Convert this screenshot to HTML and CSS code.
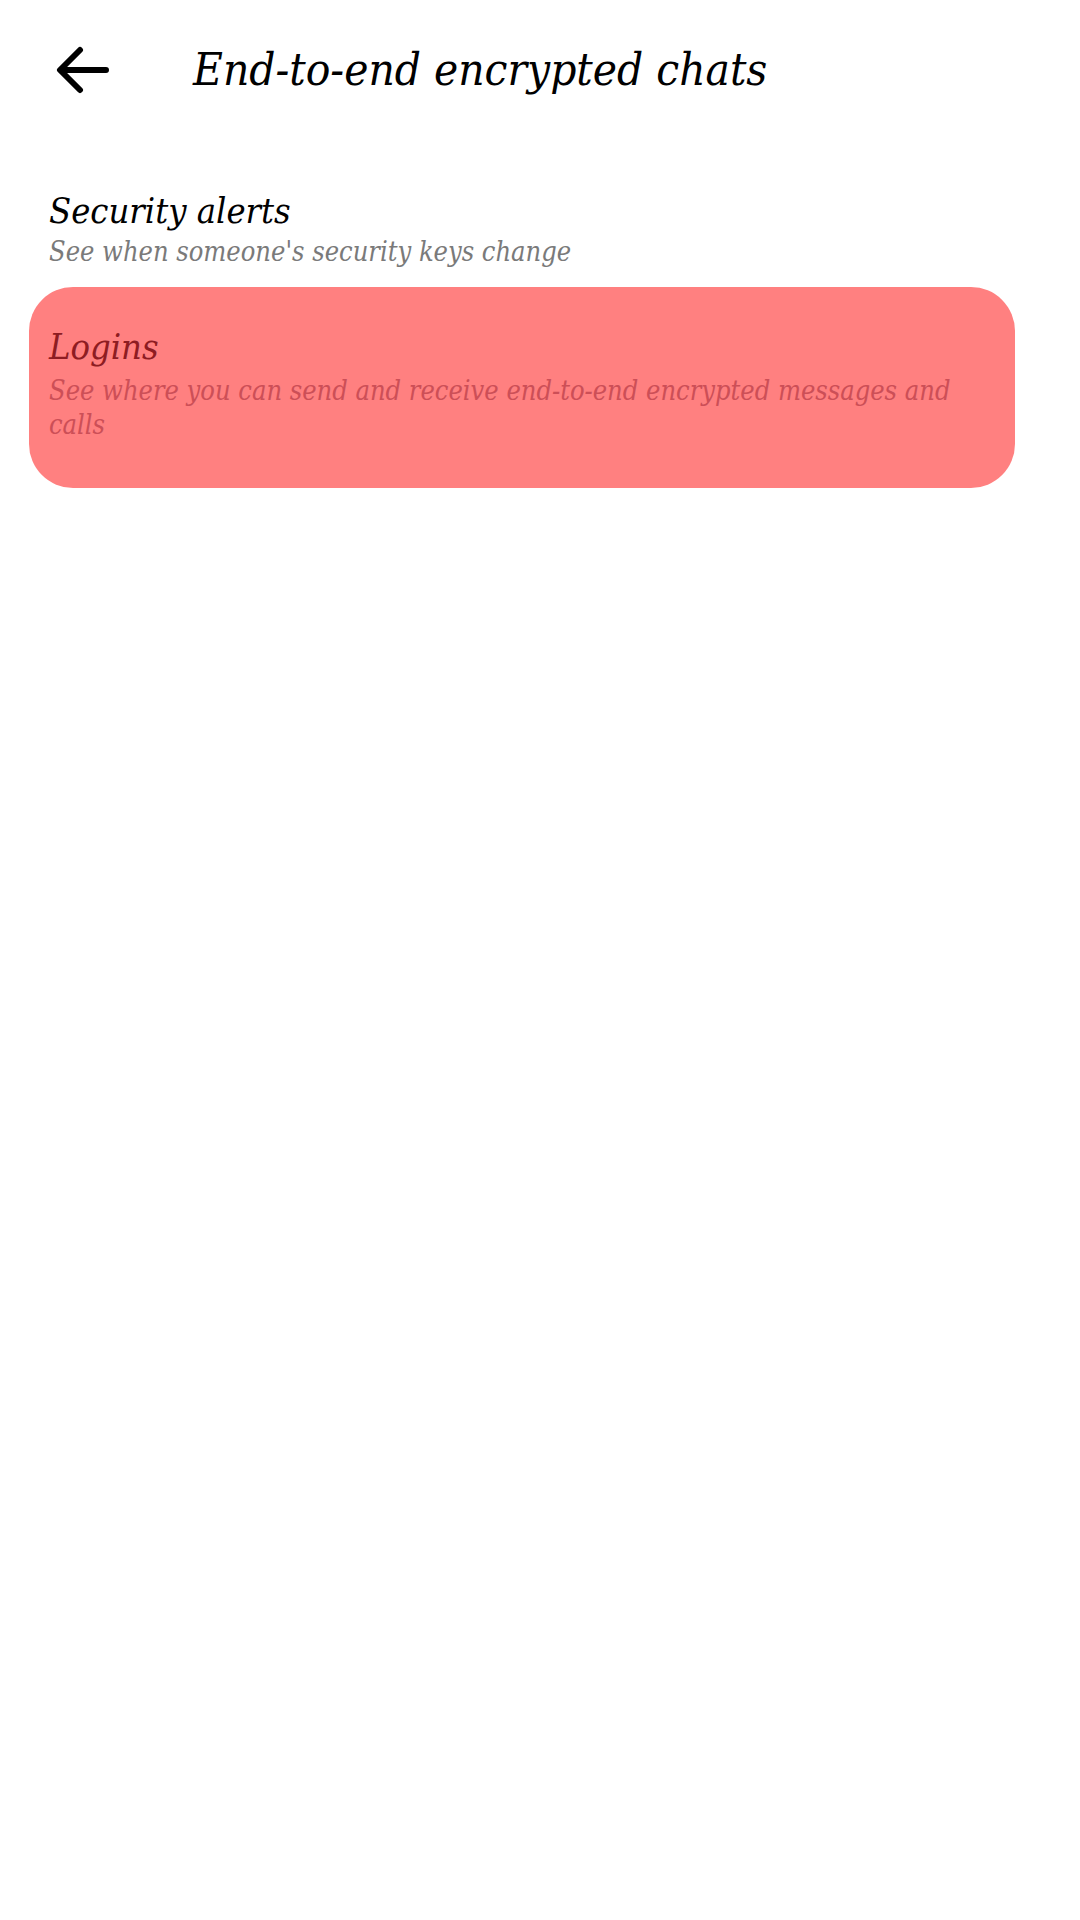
FILE: index.html
```html
<!DOCTYPE html>
<html lang="en">
<head>
<meta charset="utf-8">
<title>End-to-end encrypted chats</title>
<link rel="stylesheet" href="styles.css">
</head>
<body>
<div class="screen">
  <header class="topbar">
    <button class="back" aria-label="Back">
      <svg viewBox="0 0 54 48" width="54" height="48" aria-hidden="true">
        <path d="M50 24 H5 M24 4 L4 24 L24 44" fill="none" stroke="#000" stroke-width="6" stroke-linecap="round" stroke-linejoin="round"/>
      </svg>
    </button>
    <h1 class="title">End-to-end encrypted chats</h1>
  </header>
  <ul class="list">
    <li class="item">
      <div class="item-title">Security alerts</div>
      <div class="item-sub">See when someone's security keys change</div>
    </li>
    <li class="item item-active">
      <div class="item-title">Logins</div>
      <div class="item-sub">See where you can send and receive end-to-end encrypted messages and calls</div>
    </li>
  </ul>
</div>
</body>
</html>
```

FILE: styles.css
```css
html, body {
  margin: 0;
  padding: 0;
  background: #ffffff;
}

body {
  width: 1080px;
  height: 1920px;
  font-family: "DejaVu Serif Condensed", "DejaVu Serif", serif;
  font-style: italic;
  font-stretch: condensed;
}

.screen {
  display: flex;
  flex-direction: column;
}

.topbar {
  display: flex;
  align-items: center;
  height: 140px;
  padding-left: 56px;
  box-sizing: border-box;
}

.back {
  display: flex;
  align-items: center;
  justify-content: center;
  width: 54px;
  height: 48px;
  padding: 0;
  border: 0;
  background: transparent;
  margin-right: 83px;
}

.back svg {
  display: block;
}

.title {
  margin: 0;
  font-size: 45.5px;
  font-weight: normal;
  color: #000;
  line-height: 1;
}

.list {
  list-style: none;
  margin: 0;
  padding: 0 65px 0 29px;
  display: flex;
  flex-direction: column;
}

.item {
  padding: 49px 20px 18px 20px;
  display: flex;
  flex-direction: column;
}

.item-title {
  font-size: 36px;
  line-height: 44px;
  color: #000;
}

.item-sub {
  margin-top: 2px;
  font-size: 27px;
  line-height: 34px;
  color: #7a7a7a;
}

.item-active {
  padding: 38px 20px 46px 20px;
  background: #ff8080;
  border-radius: 44px;
}

.item-active .item-title {
  color: #8e1c22;
}

.item-active .item-sub {
  margin-top: 5px;
  color: #cc4f57;
}
```
